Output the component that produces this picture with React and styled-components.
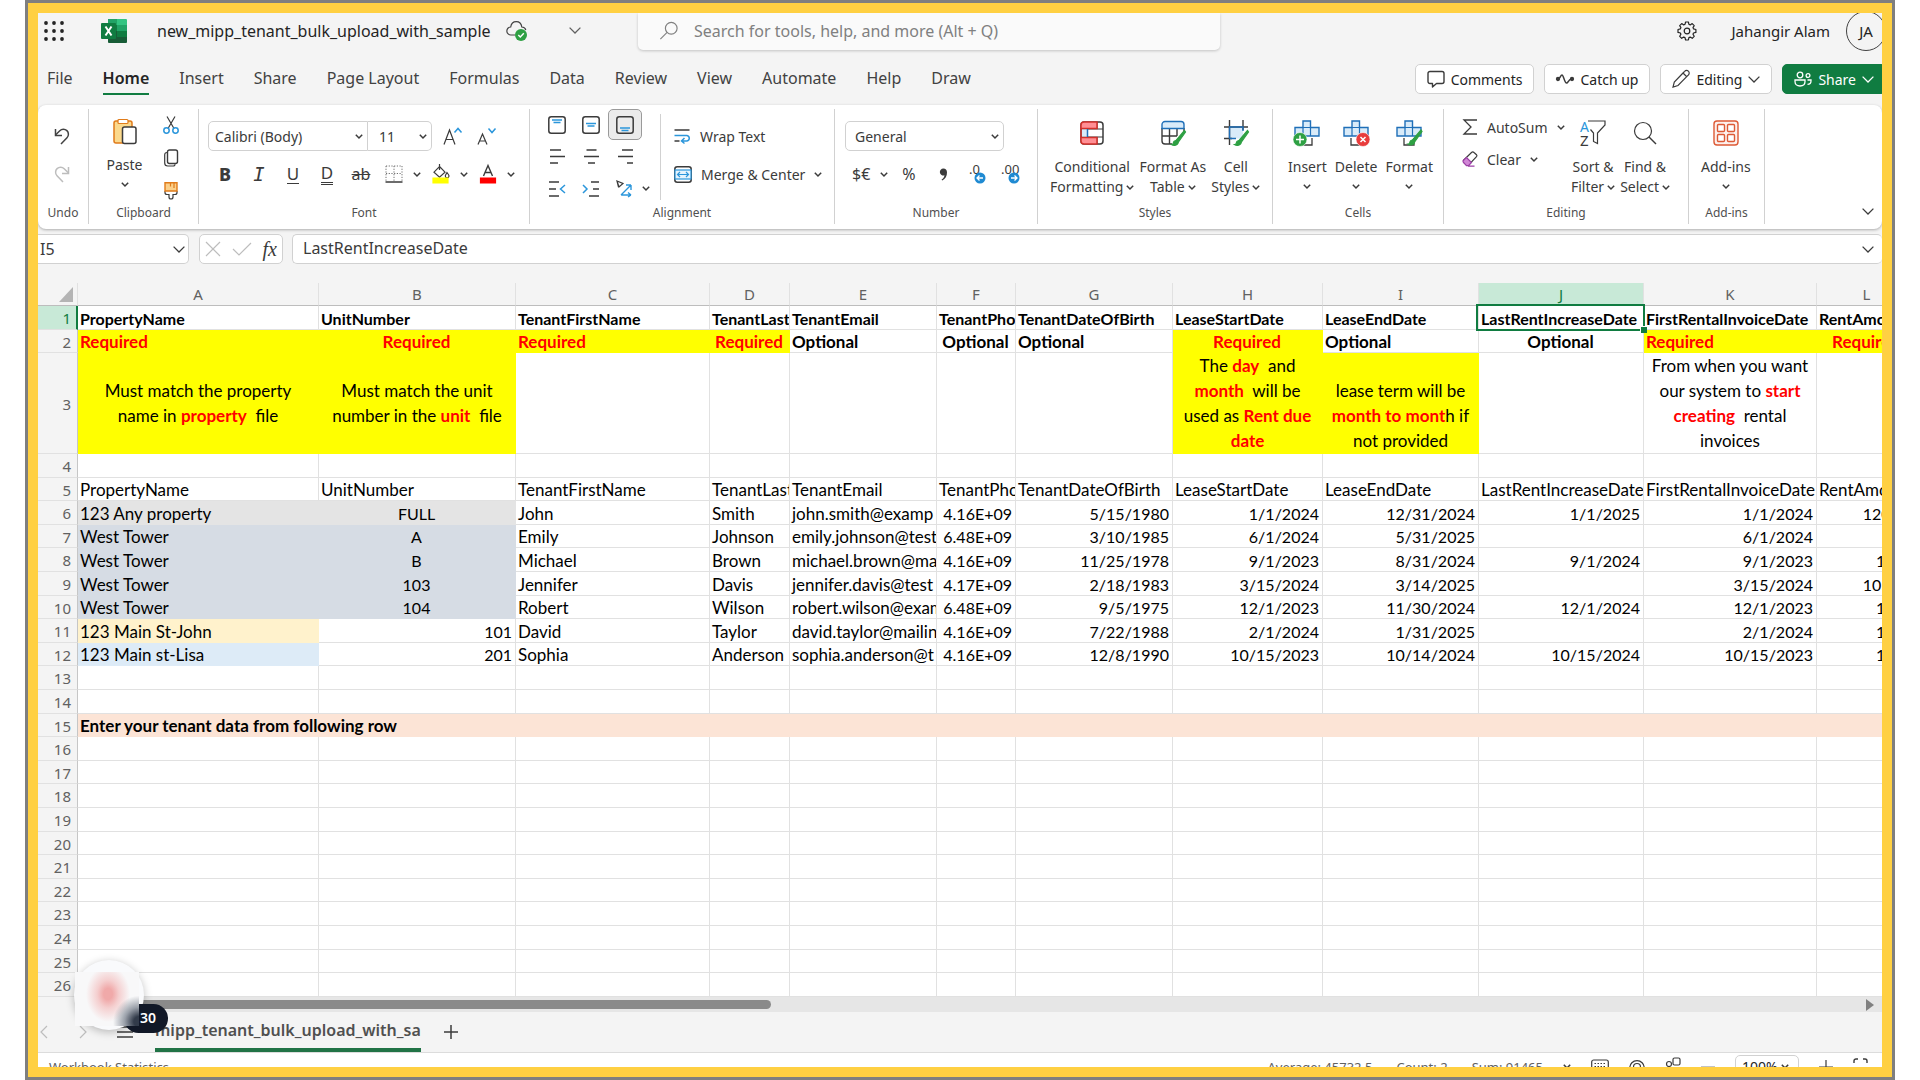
import React from 'react';
import styled, { createGlobalStyle, css } from 'styled-components';

const colors = {
  green: '#107c41',
  blue: '#2b96db',
  deepBlue: '#1f6fb8',
  paleBlue: '#d9ebf9',
  ink: '#3b3b3b',
  chrome: '#f4f4f4',
  line: '#d1d1d1',
  grid: '#e1e1e1',
  yellow: '#ffff00',
  red: '#ff0000',
};

const uiFont = "'Noto Sans', 'Open Sans', sans-serif";
const cellFont = "Lato, 'Noto Sans', sans-serif";

const GlobalStyle = createGlobalStyle`
  * {
    box-sizing: border-box;
  }

  body {
    margin: 0;
    background: #fff;
    color: ${colors.ink};
    font-family: ${uiFont};
  }

  button, input, select {
    margin: 0;
    padding: 0;
    border: 0;
    background: none;
    color: inherit;
    font: inherit;
    outline: none;
  }

  button {
    cursor: pointer;
  }
`;

const Frame = styled.div`
  margin: 0 25px;
  height: 100vh;
  border: 3px solid #7f7f7f;
  background: #ffd042;
  padding: 10px;
`;

const Window = styled.main`
  position: relative;
  height: 100%;
  overflow: hidden;
  display: flex;
  flex-direction: column;
  background: ${colors.chrome};
`;

const Svg = styled.svg`
  display: block;
  flex: none;
  overflow: visible;
`;

const Icon = ({ w = 20, h = w, box = '0 0 20 20', stroke = colors.ink, sw = 1.2, children }) => (
  <Svg width={w} height={h} viewBox={box} fill="none" stroke={stroke} strokeWidth={sw} aria-hidden="true">
    {children}
  </Svg>
);

const Caret = () => (
  <Icon w={8} h={5} box="0 0 8 5" sw={1.5}><path d="M.8.8 4 4 7.2.8" /></Icon>
);

const Chevron = ({ color = colors.ink }) => (
  <Icon w={12} h={7} box="0 0 12 7" stroke={color} sw={1.3}><path d="M.6.6 6 6 11.4.6" /></Icon>
);

/* ---------- title bar ---------- */

const TitleBar = styled.header`
  flex: none;
  height: 35px;
  display: flex;
  align-items: center;
  font-size: 16px;
  color: #242424;
`;

const TitleLeft = styled.div`
  width: 600px;
  display: flex;
  align-items: center;
  padding-left: 6px;
`;

const IconButton = styled.button`
  display: flex;
  align-items: center;
  justify-content: center;
`;

const Logo = styled.div`
  margin: 0 30px 0 37px;
`;

const FileName = styled.h1`
  margin: 0 15px 0 0;
  font-size: 16px;
  font-weight: 400;
  white-space: nowrap;
`;

const FileMenu = styled(IconButton)`
  margin-left: 42px;
`;

const SearchBox = styled.label`
  flex: 0 1 582px;
  height: 37px;
  align-self: flex-start;
  display: flex;
  align-items: center;
  gap: 16px;
  padding: 0 0 2px 22px;
  background: #fafafa;
  border-radius: 0 0 5px 5px;
  box-shadow: 0 1px 3px rgba(0, 0, 0, 0.2);

  input {
    flex: 1;
  }

  input::placeholder {
    color: #808080;
    opacity: 1;
  }
`;

const TitleRight = styled.div`
  flex: 1;
  display: flex;
  align-items: center;
  justify-content: flex-end;
  margin-right: -4px;
`;

const UserName = styled.span`
  margin: 0 16px 0 34px;
  font-size: 15px;
`;

const Avatar = styled.button`
  flex: none;
  width: 40px;
  height: 40px;
  border: 1px solid #424242;
  border-radius: 50%;
  font-size: 15px;
`;

/* ---------- tabs ---------- */

const TabBar = styled.div`
  flex: none;
  height: 57px;
  display: flex;
  align-items: center;
  justify-content: space-between;
  padding: 5px 0 0 9px;
`;

const Tabs = styled.nav`
  display: flex;
  gap: 30px;
`;

const Tab = styled.button`
  height: 32px;
  font-size: 16px;
  font-weight: ${({ $active }) => ($active ? 600 : 400)};
  color: ${({ $active }) => ($active ? '#242424' : '#424242')};
  border-bottom: 2px solid ${({ $active }) => ($active ? colors.green : 'transparent')};
`;

const Actions = styled.div`
  display: flex;
  gap: 10px;
  margin-right: -4px;
`;

const ActionButton = styled.button`
  height: 30px;
  display: flex;
  align-items: center;
  gap: 6px;
  padding: 0 11px;
  border: 1px solid ${({ $primary }) => ($primary ? colors.green : colors.line)};
  border-radius: 5px;
  background: ${({ $primary }) => ($primary ? colors.green : '#fff')};
  color: ${({ $primary }) => ($primary ? '#fff' : '#242424')};
  font-size: 14px;
  white-space: nowrap;
`;

/* ---------- ribbon ---------- */

const Ribbon = styled.section`
  flex: none;
  height: 124px;
  display: flex;
  padding: 4px 0 5px;
  background: #fff;
  border-radius: 8px;
  box-shadow: 0 1px 3px rgba(0, 0, 0, 0.3);
  font-size: 14px;
`;

const GroupBox = styled.div`
  flex: none;
  width: ${({ $width }) => $width}px;
  display: flex;
  flex-direction: column;
  border-right: 1px solid ${colors.line};
`;

const GroupBody = styled.div`
  flex: 1;
  display: flex;
  min-height: 0;
  padding: 0 ${({ $pad }) => $pad || 0}px;
`;

const GroupLabel = styled.div`
  height: 22px;
  line-height: 22px;
  text-align: center;
  font-size: 12px;
  color: #505050;
`;

const Group = ({ label, width, pad, children }) => (
  <GroupBox $width={width}>
    <GroupBody $pad={pad}>{children}</GroupBody>
    <GroupLabel>{label}</GroupLabel>
  </GroupBox>
);

const IconColumn = styled.div`
  width: ${({ $width }) => $width}px;
  display: flex;
  flex-direction: column;
  align-items: center;
  padding-top: ${({ $top }) => $top}px;
  gap: ${({ $gap }) => $gap}px;
`;

const BigButton = styled.button`
  display: flex;
  flex-direction: column;
  align-items: center;
  padding-top: 11px;
  line-height: 20px;
  white-space: nowrap;

  > svg:first-child {
    margin-bottom: 11px;
  }

  > svg:last-child {
    margin-top: 7px;
  }
`;

const CaretLine = styled.span`
  display: flex;
  align-items: center;
  gap: 3px;
`;

const PasteButton = styled(BigButton)`
  width: 71px;
  padding-top: 9px;

  > svg:first-child {
    margin-bottom: 10px;
  }
`;

const Stack = styled.div`
  flex: 1;
  display: flex;
  flex-direction: column;
  padding-top: 12px;
  gap: 8px;
`;

const Line = styled.div`
  height: 30px;
  display: flex;
  align-items: center;
`;

const SelectBox = styled.div`
  width: ${({ $width }) => $width}px;
  height: 30px;
  display: grid;
  align-items: center;
  border: 1px solid ${colors.line};
  border-radius: ${({ $shape }) => $shape || '5px'};
  background: #fff;

  & + & {
    border-left: 0;
  }

  select {
    grid-area: 1 / 1;
    width: 100%;
    height: 28px;
    appearance: none;
    padding-left: ${({ $pad }) => $pad || 6}px;
  }

  svg {
    grid-area: 1 / 1;
    justify-self: end;
    margin-right: 4px;
    pointer-events: none;
  }
`;

const Dropdown = ({ label, value, ...box }) => (
  <SelectBox {...box}>
    <select aria-label={label} defaultValue={value}><option>{value}</option></select>
    <Caret />
  </SelectBox>
);

const SizeButtons = styled.div`
  display: flex;
  align-items: center;
  gap: 15px;
  padding-left: 11px;
`;

const ToolButton = styled.button`
  width: 34px;
  height: 30px;
  display: flex;
  align-items: center;
  justify-content: center;
`;

const SplitButton = styled.button`
  width: 47px;
  height: 30px;
  display: flex;
  align-items: center;
  gap: 10px;
  padding-left: 7px;
`;

const AlignGrid = styled.div`
  display: grid;
  grid-template-columns: repeat(3, 34px);
  grid-auto-rows: 31px;
  row-gap: 1px;
  padding-left: 10px;
  width: 130px;
`;

const AlignButton = styled.button`
  display: flex;
  align-items: center;
  justify-content: center;
  border: 1px solid ${({ $on }) => ($on ? '#9a9a9a' : 'transparent')};
  border-radius: 5px;
  background: ${({ $on }) => ($on ? '#ebebeb' : 'none')};
`;

const OrientButton = styled(AlignButton)`
  width: 50px;
  gap: 9px;
  justify-content: flex-start;
  padding-left: 7px;
`;

const WrapStack = styled(Stack)`
  border-left: 1px solid ${colors.line};
  margin: 5px 0 2px;
  padding: 7px 0 0 13px;
`;

const TextButton = styled.button`
  height: ${({ $h }) => $h || 30}px;
  display: flex;
  align-items: center;
  gap: 9px;
  white-space: nowrap;
`;

const EditStack = styled.div`
  width: 120px;
  padding-top: 2px;
`;

const Symbol = styled.span`
  font-size: 16px;
`;

const Buttons = styled.div`
  display: flex;
  align-items: flex-start;
  gap: ${({ $gap }) => $gap}px;
`;

const RibbonEnd = styled.div`
  flex: 1;
  display: flex;
  align-items: flex-end;
  justify-content: flex-end;
  padding: 0 8px 9px 0;
`;

/* ---------- formula bar ---------- */

const FormulaBar = styled.div`
  flex: none;
  height: 54px;
  display: flex;
  padding-top: 5px;
  font-size: 16px;
`;

const FormulaBox = styled.div`
  height: 30px;
  display: flex;
  align-items: center;
  justify-content: space-between;
  background: #fff;
  border: 1px solid ${colors.line};
  border-radius: 5px;
`;

const NameBox = styled(FormulaBox)`
  width: 151px;
  margin-right: 10px;
  padding: 0 3px 0 2px;
  border-left: 0;
  border-radius: 0 5px 5px 0;

  input {
    width: 100px;
  }
`;

const FxBox = styled(FormulaBox)`
  width: 84px;
  margin-right: 9px;
  padding: 0 5px;
`;

const FormulaInput = styled(FormulaBox)`
  flex: 1;
  padding: 0 8px 0 10px;
  border-right: 0;

  input {
    flex: 1;
    height: 26px;
    align-self: flex-start;
  }
`;

const Fx = styled.span`
  font-family: 'Liberation Serif', serif;
  font-style: italic;
  font-size: 20px;
`;

/* ---------- sheet ---------- */

const Sheet = styled.div`
  position: relative;
  flex: 1 0 auto;
  overflow: hidden;
`;

const Table = styled.table`
  width: 1879px;
  table-layout: fixed;
  border-collapse: separate;
  border-spacing: 0;
  background: #fff;
  font-family: ${cellFont};
  color: #000;
`;

const Row = styled.tr`
  height: ${({ $tall }) => ($tall ? 101 : 24)}px;

  &:nth-child(5n),
  &:nth-child(5n + 2) {
    height: 23px;
  }
`;

const HeadRow = styled.tr`
  height: 23px;
`;

const header = css`
  padding: 0;
  background: ${({ $on }) => ($on ? '#c8e9d7' : colors.chrome)};
  color: ${({ $on }) => ($on ? colors.green : '#616161')};
  font-family: ${uiFont};
  font-size: 15px;
  font-weight: 400;
  line-height: 20px;
`;

const ColHead = styled.th`
  ${header}
  border-right: 1px solid ${colors.grid};
  border-bottom: 1px solid #bdbdbd;
`;

const Corner = styled(ColHead)`
  svg {
    margin-left: 21px;
  }
`;

const RowHead = styled.th`
  ${header}
  padding: 1px ${({ $on }) => ($on ? 5 : 6)}px 0 0;
  text-align: right;
  border-right: ${({ $on }) => ($on ? `2px solid ${colors.green}` : '1px solid #c6c6c6')};
  border-bottom: 1px solid ${colors.grid};
`;

const Cell = styled.td`
  position: relative;
  padding: 2px 3px 0 2px;
  overflow: ${({ $selected }) => ($selected ? 'visible' : 'hidden')};
  white-space: nowrap;
  text-align: ${({ $align }) => $align || 'left'};
  font-size: ${({ $small }) => ($small ? 16 : 17)}px;
  line-height: 20px;
  font-weight: ${({ $bold }) => ($bold ? 700 : 400)};
  color: ${({ $red }) => ($red ? colors.red : '#000')};
  background: ${({ $bg }) => $bg || '#fff'};
  border-right: 1px solid ${({ $bg }) => $bg || colors.grid};
  border-bottom: 1px solid ${({ $bg }) => $bg || colors.grid};

  b {
    color: ${colors.red};
  }
`;

const NoteCell = styled(Cell)`
  padding: 0;
  line-height: 25px;
  vertical-align: ${({ $low }) => ($low ? 'bottom' : 'middle')};
`;

const Selection = styled.span`
  position: absolute;
  z-index: 1;
  inset: -2px -2px -2px -3px;
  border: 2px solid ${colors.green};

  &::after {
    content: '';
    position: absolute;
    right: -4px;
    bottom: -4px;
    width: 6px;
    height: 6px;
    background: ${colors.green};
    border: 1px solid #fff;
    border-width: 1px 0 0 1px;
  }
`;

const ScrollTrack = styled.div`
  flex: none;
  height: 15px;
  margin-left: 40px;
  padding: 0 8px 0 17px;
  display: flex;
  align-items: center;
  justify-content: space-between;
  background: #e6e6e6;
`;

const ScrollThumb = styled.div`
  width: 38%;
  height: 9px;
  border-radius: 5px;
  background: #8a8a8a;
`;

const SheetBar = styled.div`
  flex: none;
  height: 40px;
  display: flex;
  align-items: stretch;
  padding-left: 2px;
`;

const SheetNav = styled.div`
  width: 115px;
  display: flex;
  align-items: center;
  justify-content: space-between;
  padding: 0 22px 0 0;
`;

const SheetTab = styled.button`
  border-bottom: 4px solid #217346;
  font-size: 16px;
  font-weight: 600;
  color: #505050;
  margin-right: 22px;
`;

const StatusBar = styled.footer`
  flex: none;
  height: 28px;
  display: flex;
  align-items: center;
  justify-content: space-between;
  padding: 0 14px 0 11px;
  background: #fff;
  border-top: 1px solid #dcdcdc;
  font-size: 13px;
  color: #616161;
`;

const StatusItems = styled.div`
  display: flex;
  align-items: center;
  gap: ${({ $gap }) => $gap}px;
`;

const ZoomSelect = styled(SelectBox)`
  height: 24px;
  color: #242424;
  font-size: 14px;

  select {
    height: 20px;
  }

  svg {
    margin-right: 9px;
  }
`;

const Bubble = styled.div`
  position: absolute;
  z-index: 2;
  left: 36px;
  bottom: 37px;
  width: 70px;
  height: 70px;
  border-radius: 50%;
  background: #f9fafc;
  box-shadow: 0 2px 8px rgba(0, 0, 0, 0.25);
`;

const Badge = styled.span`
  position: absolute;
  left: 50px;
  top: 44px;
  width: 44px;
  height: 29px;
  padding-right: 12px;
  border-radius: 15px;
  background: #111827;
  color: #fff;
  font-size: 14px;
  font-weight: 600;
  line-height: 28px;
  text-align: right;
`;

const Smudge = styled.span`
  position: absolute;
  left: 1px;
  top: 12px;
  width: 64px;
  height: 54px;
  background:
    radial-gradient(ellipse 26px 26px at 100% 92%, #323b4a 20%, rgba(90, 100, 115, 0.6) 55%, transparent 100%),
    radial-gradient(ellipse 22px 28px at 33px 22px, #f0a9a9 20%, rgba(243, 190, 190, 0.7) 50%, transparent 100%),
    #f8f8f9;
`;

/* ---------- drawings ---------- */

const Waffle = () => (
  <Icon stroke="none">
    {[2, 10, 18].map((y) => [2, 10, 18].map((x) => <circle key={`${x}${y}`} cx={x} cy={y} r="1.9" fill="#242424" />))}
  </Icon>
);

const ExcelLogo = () => (
  <Icon w={26} h={24} box="0 0 26 24" stroke="none">
    <path d="M7 0h10v6H7z" fill="#21a366" />
    <path d="M16 0h9a1 1 0 0 1 1 1v5H16z" fill="#33c481" />
    <path d="M7 6h9v6H7z" fill="#107c41" />
    <path d="M16 6h10v6H16z" fill="#21a366" />
    <path d="M7 12h9v11H7z" fill="#185c37" />
    <path d="M16 12h10v6H16z" fill="#107c41" />
    <path d="M7 18h19v5a1 1 0 0 1-1 1H8a1 1 0 0 1-1-1z" fill="#185c37" />
    <rect y="4" width="15" height="16" rx="1" fill="#107c41" />
    <path d="m4.5 7.500 6 9M10.500 7.500l-6 9" stroke="#fff" strokeWidth="2" />
  </Icon>
);

const CloudSaved = () => (
  <Icon w={21} h={20} box="0 0 21 20" stroke="#424242">
    <path d="M9 14H5a4 4 0 0 1-.3-8C5.200 2.500 7.500.7 10.300.7s5 1.800 5.500 5.300c2 .2 3.600 1.400 4 3" />
    <circle cx="15" cy="14" r="6" fill="#2ea043" stroke="none" />
    <path d="m12.300 14 2 2 3.500-3.800" stroke="#fff" strokeWidth="1.400" />
  </Icon>
);

const Gear = () => (
  <Icon box="0 0 20 20" stroke="#242424">
    <path d="M8.600 1h2.800l.5 2.300 1.300.6 2-1.300 2 2-1.200 2 .5 1.300 2.400.6v2.900l-2.400.6-.5 1.300 1.200 2-2 2-2-1.200-1.300.5-.5 2.400H8.600l-.6-2.400-1.300-.5-2 1.200-2-2 1.200-2-.5-1.300-2.400-.6V8.500l2.400-.6.5-1.300-1.200-2 2-2 2 1.300 1.300-.6z" strokeLinejoin="round" />
    <circle cx="10" cy="10" r="2.800" />
  </Icon>
);

const Magnifier = () => (
  <Icon w={18} stroke="#808080" sw={1.3}><circle cx="12.500" cy="7" r="6.500" /><path d="m7.900 11.600-7.500 7.500" /></Icon>
);

const Paste = () => (
  <Icon w={24} h={27} box="0 0 24 27">
    <rect x="1" y="3" width="18" height="22" rx="2" fill="#fbd98d" stroke="#e07b1a" strokeWidth="1.500" />
    <path d="M6 1.500h8a1 1 0 0 1 1 1v2a1 1 0 0 1-1 1H6a1 1 0 0 1-1-1v-2a1 1 0 0 1 1-1z" fill="#fff" stroke="#e07b1a" />
    <rect x="9.500" y="9" width="13.500" height="16.500" rx="2" fill="#fff" strokeWidth="1.500" />
  </Icon>
);

const Cut = () => (
  <Icon w={16} h={18} box="0 0 16 18">
    <path d="m4 .5 7 12M12 .5l-7 12" />
    <circle cx="3.500" cy="14.500" r="2.700" stroke={colors.blue} strokeWidth="1.500" />
    <circle cx="12.500" cy="14.500" r="2.700" stroke={colors.blue} strokeWidth="1.500" />
  </Icon>
);

const Copy = () => (
  <Icon w={14} h={18} box="0 0 14 18">
    <rect x="3.500" y="1" width="10" height="13.500" rx="2" strokeWidth="1.400" />
    <path d="M3 3.500C1.500 3.500.7 4.500.7 6v8a3 3 0 0 0 3 3H9c1.200 0 2-.6 2-1.800" />
  </Icon>
);

const Painter = () => (
  <Icon w={14} h={18} box="0 0 14 18">
    <path d="M1 9v1.500a2 2 0 0 0 2 2h2V15a2 2 0 0 0 4 0v-2.500h2a2 2 0 0 0 2-2V9" />
    <path d="M1 .8h12V9H1z" fill="#fbd08a" stroke="#e07b1a" strokeWidth="1.400" />
    <path d="M6.500 1v3.500M10 1v5" stroke="#e07b1a" />
  </Icon>
);

const Undo = ({ flip, color }) => (
  <Icon w={16} h={18} box="0 0 16 18" stroke={color || '#424242'} sw={1.5}>
    <g transform={flip ? 'matrix(-1 0 0 1 16 0)' : undefined}>
      <path d="M1.500 2v6.500H8" />
      <path d="m1.500 8 4.300-4.300a5 5 0 0 1 7.200 7L7 17" />
    </g>
  </Icon>
);

const Grow = ({ up }) => (
  <Icon w={19} h={20} box="0 0 19 20">
    {up ? <path d="M1 18.500 6.500 4 12 18.500M3 13.500h7" /> : <path d="M1 18.500 5.500 8 10 18.500M2.800 15h5.500" />}
    <path d={up ? 'm11.500 6.500 3.500-4 3.500 4' : 'm11.500 2.500 3.500 4 3.500-4'} stroke={colors.blue} strokeWidth="1.500" />
  </Icon>
);

const Bold = styled.span`
  font-size: 18px;
  font-weight: 800;
`;

const Italic = styled.span`
  font: italic 19px 'DejaVu Sans Mono', monospace;
`;

const Under = styled.span`
  font-size: 17px;
  line-height: 18px;
  border-bottom: ${({ $double }) => ($double ? '3px double' : '1px solid')} ${colors.ink};
`;

const Strike = styled.span`
  font-size: 16px;
  text-decoration: line-through;
`;

const Borders = () => (
  <Icon w={18} box="0 0 18 18" stroke="#707070">
    <path d="M1 1h16M1 8.500h16M1 1v15M9 1v15M17 1v15" strokeWidth="1" strokeDasharray="1.200 1.500" />
    <path d="M.5 17h17" stroke={colors.ink} strokeWidth="1.500" />
  </Icon>
);

const Fill = () => (
  <Icon w={18} h={20} box="0 0 18 20">
    <path d="m7.500 2.500 5.500 5.700-5.500 5-5.500-5zM7.500 0v6" />
    <path d="M15 8.500c1.500 2 2 2.800 2 3.600a1.800 1.800 0 0 1-3.700 0c0-.8.600-1.600 1.700-3.600z" />
    <path d="M1 14h15v5H1z" fill={colors.yellow} stroke={colors.yellow} />
  </Icon>
);

const FontColor = () => (
  <Icon w={18} h={20} box="0 0 18 20">
    <path d="M4.500 12 9 1.500 13.500 12M6 8.500h6" strokeWidth="1.400" />
    <path d="M1.500 14h15v5h-15z" fill={colors.red} stroke={colors.red} />
  </Icon>
);

const VAlign = ({ y }) => (
  <Icon w={18} box="0 0 18 18">
    <rect x=".8" y=".8" width="16.400" height="16.400" rx="2.500" strokeWidth="1.500" />
    <path d={`M4 ${y}h10M5.500 ${y + 2.5}h7`} stroke={colors.blue} strokeWidth="1.300" />
  </Icon>
);

const hLines = {
  left: 'M1 1h11M1 7.500h15M1 14h8',
  center: 'M3.500 1h10M1 7.500h15M5 14h7',
  right: 'M5 1h11M1 7.500h15M10 14h6',
};

const HAlign = ({ side }) => (
  <Icon w={17} h={15} box="0 0 17 15"><path d={hLines[side]} strokeWidth="1.500" /></Icon>
);

const Indent = ({ right }) => (
  <Icon w={18} h={16} box="0 0 18 16" sw={1.5}>
    <path d={right ? 'M9 1h8M11 8h6M7 15h10' : 'M1 1h10M1 8h7M1 15h10'} />
    <path d={right ? 'm1 4 4 4-4 4' : 'm17 4-4.500 4 4.500 4'} stroke={colors.blue} />
  </Icon>
);

const Orient = () => (
  <Icon w={17} h={17} box="0 0 17 17">
    <path d="M1 1l6 2.500-4 3.500zM1 1l1.500 6" />
    <path d="M5 15 15 5m0 0h-5m5 0v5M5 15h10m0 0-3-2.500m3 2.500-3 2" stroke={colors.blue} strokeWidth="1.400" />
  </Icon>
);

const Wrap = () => (
  <Icon w={17} h={14} box="0 0 17 14" sw={1.5}>
    <path d="M.5 1h15M.5 12h5" />
    <path d="M.5 6.500H13a2.800 2.800 0 0 1 0 5.500H8m2.500-3L7.500 12l3 2.500" stroke={colors.blue} />
  </Icon>
);

const Merge = () => (
  <Icon w={18} h={17} box="0 0 18 17">
    <rect x=".8" y=".8" width="16.400" height="15.400" rx="2.500" strokeWidth="1.500" />
    <rect x="1" y="4" width="16" height="9" fill="#e6f3fc" stroke={colors.blue} />
    <path d="M3.500 8.500h11M6 6 3.500 8.500 6 11M12 6l2.500 2.500L12 11" stroke={colors.blue} />
  </Icon>
);

const Decimal = ({ zeros, right }) => (
  <Icon w={20} h={20} box="0 0 20 20">
    <text x={right ? 0 : 2} y="10" fontSize="13" fill={colors.ink} stroke="none" fontFamily={uiFont}>{zeros}</text>
    <circle cx="13" cy="14" r="5.500" fill="#1f8ad2" stroke="none" />
    <path d={right ? 'M10 14h6m-2.500-2.500L16 14l-2.500 2.500' : 'M16 14h-6m2.500-2.500L10 14l2.500 2.500'} stroke="#fff" strokeWidth="1.300" />
  </Icon>
);

const Conditional = () => (
  <Icon w={24} h={26} box="0 0 24 26">
    <rect x="1" y="2" width="22" height="22" rx="3" strokeWidth="1.500" />
    <path d="M1 9h22M1 17h22M17 2v7m0 8v7" />
    <path d="M4 2h13v6.500H1V5a3 3 0 0 1 3-3zM1 17.500h16V24H4a3 3 0 0 1-3-3z" fill="#ff8f94" stroke="#d3312b" strokeWidth="1.500" />
    <path d="M1 8.500v9" stroke="#d3312b" strokeWidth="1.500" />
    <path d="M2 9.500h5v7H2z" fill={colors.paleBlue} stroke="none" />
    <path d="M7.500 9v8" stroke={colors.deepBlue} strokeWidth="1.500" />
  </Icon>
);

const Brush = ({ x = 0, y = 0 }) => (
  <g transform={`translate(${x} ${y})`} stroke="none">
    <path d="M13 0 4.500 10l2 2L14 1.500z" fill="#2ea043" stroke="#2ea043" />
    <path d="M5 10c-2 0-3 1-3.200 2.500C1.700 13.600 1 14 0 14c2 1.500 6.500 1 6.500-2z" fill="#2ea043" stroke="#2ea043" />
  </g>
);

const FormatTable = () => (
  <Icon w={24} h={26} box="0 0 24 26">
    <path d="M1 8v13a3 3 0 0 0 3 3h7M8.500 8v16M16 8v8M1 16h15M23 8v3" strokeWidth="1.400" />
    <path d="M4 1.500h16a3 3 0 0 1 3 3V8.500H1v-4a3 3 0 0 1 3-3z" fill={colors.paleBlue} stroke={colors.deepBlue} strokeWidth="1.400" />
    <Brush x={10.5} y={10.5} />
  </Icon>
);

const CellStyles = () => (
  <Icon w={24} h={26} box="0 0 24 26">
    <path d="M6 7.500h13v11H6z" fill={colors.paleBlue} stroke="none" />
    <path d="M0 7h24M0 18.500h8M5.500 0v25M19 0v10" strokeWidth="1.400" />
    <path d="M5.500 18.500V7H19v4M5.500 18.500H12" stroke={colors.deepBlue} strokeWidth="1.400" />
    <Brush x={10.5} y={10.5} />
  </Icon>
);

const CellsCross = ({ children }) => (
  <Icon w={26} h={26} box="0 0 26 26">
    <path d="M2 13V8h22v3M8 18v7h10v-7" strokeWidth="1.300" />
    <path d="M9 1h7.500v6.500H25v8.500H1V7.500h8z" fill={colors.paleBlue} stroke={colors.deepBlue} strokeWidth="1.400" />
    <path d="M9 7.500V16M16.500 7.500V16M9 7.500h7.500" stroke={colors.deepBlue} strokeWidth="1.200" />
    {children}
  </Icon>
);

const InsertCells = () => (
  <CellsCross>
    <circle cx="6" cy="19.500" r="7" fill="#2ea043" stroke="#fff" strokeWidth=".6" />
    <path d="M6 15.500v8M2 19.500h8" stroke="#fff" strokeWidth="1.500" />
  </CellsCross>
);

const DeleteCells = () => (
  <CellsCross>
    <circle cx="20" cy="19.500" r="7" fill="#e83c3c" stroke="#fff" strokeWidth=".6" />
    <path d="m17.500 17 5 5m0-5-5 5" stroke="#fff" strokeWidth="1.500" />
  </CellsCross>
);

const FormatCells = () => <CellsCross><Brush x={12} y={10} /></CellsCross>;

const Sigma = () => (
  <Icon w={16} h={16} box="0 0 16 16"><path d="M15 1H2l7 7-7 7h13" strokeWidth="1.300" /></Icon>
);

const Eraser = () => (
  <Icon w={16} h={16} box="0 0 16 16">
    <path d="M9.500 1.500 1.500 9.200l5 5 8-8.500a1.500 1.500 0 0 0 0-2L12 1.500a1.800 1.800 0 0 0-2.500 0z" />
    <path d="m1.500 9.200 3-2.700 5 5-3 3.200h-2l-3-3.200a1.600 1.600 0 0 1 0-2.300zM6 15.200h6.500" fill="#d187d6" stroke="#9b3fa5" />
  </Icon>
);

const SortFilter = () => (
  <Icon w={26} h={26} box="0 0 26 26">
    <text x="0" y="12" fontSize="14" fill={colors.blue} stroke="none" fontFamily={uiFont}>A</text>
    <text x="0" y="25.500" fontSize="15" fill={colors.ink} stroke="none" fontFamily={uiFont}>Z</text>
    <path d="M8 1h17v4l-7.500 8v10.500l-4-2V13L10.500 9.500" />
  </Icon>
);

const FindIcon = () => (
  <Icon w={24} h={26} box="0 0 24 26"><circle cx="10" cy="11" r="8.500" /><path d="m16 17 7 7" strokeWidth="1.400" /></Icon>
);

const AddIns = () => (
  <Icon w={26} box="0 0 26 26" stroke="#dd5a36" sw={1.4}>
    <rect x="1" y="1" width="24" height="24" rx="3" fill="#fdf0ec" />
    {[4.5, 14.5].map((y) => [4.5, 14.5].map((x) => <rect key={`${x}${y}`} x={x} y={y} width="7" height="7" rx="1" fill="#fff" />))}
  </Icon>
);

const Comment = () => (
  <Icon w={18} box="0 0 18 18" sw={1.4}><path d="M3 1.500h12a2 2 0 0 1 2 2v8a2 2 0 0 1-2 2H9.500L5.500 17v-3.500H3a2 2 0 0 1-2-2v-8a2 2 0 0 1 2-2z" strokeLinejoin="round" /></Icon>
);

const CatchUp = () => (
  <Icon w={18} h={10} box="0 0 18 10" sw={1.5}>
    <path d="M2 5c2 0 2.500-4 4-4s2.500 8 4.500 8S12 5 16 5" />
    <circle cx="2" cy="5" r="1.400" fill={colors.ink} /><circle cx="16" cy="5" r="1.400" fill={colors.ink} />
  </Icon>
);

const Pencil = () => (
  <Icon w={18} box="0 0 18 18"><path d="m11.500 2.500 1.200-1.200a2.400 2.400 0 0 1 3.800 3.500l-1.300 1.400L6 15.500 1 17l1.300-5zM11 3l4 4" /></Icon>
);

const People = () => (
  <Icon w={18} h={16} box="0 0 18 16" stroke="#fff" sw={1.3}>
    <circle cx="6" cy="4" r="2.800" /><circle cx="14" cy="4.500" r="1.900" />
    <path d="M1 9h10v1.500c0 3-2 4.500-5 4.500s-5-1.500-5-4.500zM13.500 9H17v1c0 2.200-1 3.300-3.500 3.300" />
  </Icon>
);

/* ---------- data ---------- */

const columns = [
  ['A', 241], ['B', 197], ['C', 194], ['D', 80], ['E', 147], ['F', 79],
  ['G', 157], ['H', 150], ['I', 156], ['J', 165], ['K', 173], ['L', 100],
];

const fields = [
  'PropertyName', 'UnitNumber', 'TenantFirstName', 'TenantLastName', 'TenantEmail', 'TenantPhone',
  'TenantDateOfBirth', 'LeaseStartDate', 'LeaseEndDate', 'LastRentIncreaseDate', 'FirstRentalInvoiceDate', 'RentAmount',
];

const required = { text: 'Required', bold: true, red: true, bg: colors.yellow };
const optional = { text: 'Optional', bold: true };
const center = (cell) => ({ ...cell, align: 'center' });
const note = (text, bg, low) => ({ text, bg, low, align: 'center', note: true });

const flags = [
  required, center(required), required, center(required), optional, center(optional),
  optional, center(required), optional, center(optional), required, center(required),
];

const notes = {
  0: note(<>Must match the property<br />name in <b>property</b>&nbsp; file</>, colors.yellow),
  1: note(<>Must match the unit<br />number in the <b>unit</b>&nbsp; file</>, colors.yellow),
  7: note(<>The <b>day</b>&nbsp; and<br /><b>month</b>&nbsp; will be<br />used as <b>Rent due</b><br /><b>date</b></>, colors.yellow),
  8: note(<>lease term will be<br /><b>month to mont</b>h if<br />not provided</>, colors.yellow, true),
  10: note(<>From when you want<br />our system to <b>start</b><br /><b>creating</b>&nbsp; rental<br />invoices</>),
};

const grey = '#e4e4e4';
const slate = '#d6dce4';

const tenants = [
  [grey, '123 Any property', 'FULL', 'John', 'Smith', 'john.smith@examp', '4.16E+09', '5/15/1980', '1/1/2024', '12/31/2024', '1/1/2025', '1/1/2024', '1200.5'],
  [slate, 'West Tower', 'A', 'Emily', 'Johnson', 'emily.johnson@test', '6.48E+09', '3/10/1985', '6/1/2024', '5/31/2025', '', '6/1/2024', ''],
  [slate, 'West Tower', 'B', 'Michael', 'Brown', 'michael.brown@ma', '4.16E+09', '11/25/1978', '9/1/2023', '8/31/2024', '9/1/2024', '9/1/2023', '1500'],
  [slate, 'West Tower', '103', 'Jennifer', 'Davis', 'jennifer.davis@test', '4.17E+09', '2/18/1983', '3/15/2024', '3/14/2025', '', '3/15/2024', '1050.5'],
  [slate, 'West Tower', '104', 'Robert', 'Wilson', 'robert.wilson@exam', '6.48E+09', '9/5/1975', '12/1/2023', '11/30/2024', '12/1/2024', '12/1/2023', '1800'],
  ['#fff2cc', '123 Main St-John', '101', 'David', 'Taylor', 'david.taylor@mailin', '4.16E+09', '7/22/1988', '2/1/2024', '1/31/2025', '', '2/1/2024', '1400'],
  ['#ddebf7', '123 Main st-Lisa', '201', 'Sophia', 'Anderson', 'sophia.anderson@t', '4.16E+09', '12/8/1990', '10/15/2023', '10/14/2024', '10/15/2024', '10/15/2023', '1600'],
];

const tenantRow = ([bg, ...values], index) => values.map((text, col) => {
  const ownUnit = index > 4;
  if (col === 0) return { text, bg };
  if (col === 1) return ownUnit ? { text, align: 'right', small: true } : { text, bg, align: 'center', small: true };
  return col < 5 ? { text } : { text, align: 'right', small: true };
});

const blank = columns.map(() => ({}));

const rows = {
  1: fields.map((text, col) => ({ text, bold: true, small: true, selected: col === 9 })),
  2: flags,
  3: columns.map((_, col) => notes[col] || {}),
  5: fields.map((text) => ({ text })),
  15: [{ text: 'Enter your tenant data from following row', bold: true, bg: '#fce4d6', span: 12 }],
};
tenants.forEach((tenant, index) => {
  rows[6 + index] = tenantRow(tenant, index);
});

const tabs = ['File', 'Home', 'Insert', 'Share', 'Page Layout', 'Formulas', 'Data', 'Review', 'View', 'Automate', 'Help', 'Draw'];

const SheetCell = ({ cell }) => {
  const Tag = cell.note ? NoteCell : Cell;
  return (
    <Tag
      colSpan={cell.span}
      $align={cell.align}
      $bold={cell.bold}
      $red={cell.red}
      $small={cell.small}
      $bg={cell.bg}
      $low={cell.low}
      $selected={cell.selected}
    >
      {cell.text}
      {cell.selected && <Selection />}
    </Tag>
  );
};

const RibbonBar = () => (
  <Ribbon aria-label="Home ribbon">
    <Group label="Undo" width={51}>
      <IconColumn $width={48} $top={18} $gap={20}>
        <IconButton aria-label="Undo"><Undo /></IconButton>
        <IconButton aria-label="Redo"><Undo flip color="#bdbdbd" /></IconButton>
      </IconColumn>
    </Group>
    <Group label="Clipboard" width={110}>
      <PasteButton><Paste /><span>Paste</span><Caret /></PasteButton>
      <IconColumn $width={22} $top={7} $gap={15}>
        <IconButton aria-label="Cut"><Cut /></IconButton>
        <IconButton aria-label="Copy"><Copy /></IconButton>
        <IconButton aria-label="Format painter"><Painter /></IconButton>
      </IconColumn>
    </Group>
    <Group label="Font" width={331} pad={9}>
      <Stack>
        <Line>
          <Dropdown label="Font" value="Calibri (Body)" $width={160} $shape="5px 0 0 5px" />
          <Dropdown label="Font size" value="11" $width={64} $pad={11} $shape="0 5px 5px 0" />
          <SizeButtons>
            <IconButton aria-label="Grow font"><Grow up /></IconButton>
            <IconButton aria-label="Shrink font"><Grow /></IconButton>
          </SizeButtons>
        </Line>
        <Line>
          <ToolButton><Bold>B</Bold></ToolButton>
          <ToolButton><Italic>I</Italic></ToolButton>
          <ToolButton><Under>U</Under></ToolButton>
          <ToolButton><Under $double>D</Under></ToolButton>
          <ToolButton><Strike>ab</Strike></ToolButton>
          <SplitButton aria-label="Borders"><Borders /><Caret /></SplitButton>
          <SplitButton aria-label="Fill color"><Fill /><Caret /></SplitButton>
          <SplitButton aria-label="Font color"><FontColor /><Caret /></SplitButton>
        </Line>
      </Stack>
    </Group>
    <Group label="Alignment" width={305}>
      <AlignGrid>
        <AlignButton aria-label="Top align"><VAlign y={4} /></AlignButton>
        <AlignButton aria-label="Middle align"><VAlign y={7.5} /></AlignButton>
        <AlignButton aria-label="Bottom align" $on><VAlign y={12} /></AlignButton>
        <AlignButton aria-label="Align left"><HAlign side="left" /></AlignButton>
        <AlignButton aria-label="Center"><HAlign side="center" /></AlignButton>
        <AlignButton aria-label="Align right"><HAlign side="right" /></AlignButton>
        <AlignButton aria-label="Decrease indent"><Indent /></AlignButton>
        <AlignButton aria-label="Increase indent"><Indent right /></AlignButton>
        <OrientButton aria-label="Orientation"><Orient /><Caret /></OrientButton>
      </AlignGrid>
      <WrapStack>
        <TextButton><Wrap />Wrap Text</TextButton>
        <TextButton><Merge />Merge &amp; Center<Caret /></TextButton>
      </WrapStack>
    </Group>
    <Group label="Number" width={203} pad={10}>
      <Stack>
        <Dropdown label="Number format" value="General" $width={159} $pad={9} />
        <Line>
          <SplitButton aria-label="Currency"><Symbol>$€</Symbol><Caret /></SplitButton>
          <ToolButton><Symbol>%</Symbol></ToolButton>
          <ToolButton aria-label="Comma style">
            <Icon w={9} h={13} box="0 0 9 13"><path d="M4.500.500a3.500 3.500 0 1 0 1 6.800C5.300 9 4.300 10.500 2.500 11.800l.8.8C6.500 10.800 8 8 8 4.500 8 2 6.500.5 4.500.5z" fill={colors.ink} stroke="none" /></Icon>
          </ToolButton>
          <ToolButton aria-label="Increase decimal"><Decimal zeros=".0" /></ToolButton>
          <ToolButton aria-label="Decrease decimal"><Decimal zeros=".00" right /></ToolButton>
        </Line>
      </Stack>
    </Group>
    <Group label="Styles" width={235} pad={12}>
      <Buttons $gap={5}>
        <BigButton><Conditional /><span>Conditional</span><CaretLine>Formatting<Caret /></CaretLine></BigButton>
        <BigButton><FormatTable /><span>Format As</span><CaretLine>Table<Caret /></CaretLine></BigButton>
        <BigButton><CellStyles /><span>Cell</span><CaretLine>Styles<Caret /></CaretLine></BigButton>
      </Buttons>
    </Group>
    <Group label="Cells" width={171} pad={15}>
      <Buttons $gap={8}>
        <BigButton><InsertCells /><span>Insert</span><Caret /></BigButton>
        <BigButton><DeleteCells /><span>Delete</span><Caret /></BigButton>
        <BigButton><FormatCells /><span>Format</span><Caret /></BigButton>
      </Buttons>
    </Group>
    <Group label="Editing" width={245} pad={18}>
      <EditStack>
        <TextButton $h={32}><Sigma />AutoSum<Caret /></TextButton>
        <TextButton $h={32}><Eraser />Clear<Caret /></TextButton>
      </EditStack>
      <Buttons $gap={5}>
        <BigButton><SortFilter /><span>Sort &amp;</span><CaretLine>Filter<Caret /></CaretLine></BigButton>
        <BigButton><FindIcon /><span>Find &amp;</span><CaretLine>Select<Caret /></CaretLine></BigButton>
      </Buttons>
    </Group>
    <Group label="Add-ins" width={76} pad={12}>
      <BigButton><AddIns /><span>Add-ins</span><Caret /></BigButton>
    </Group>
    <RibbonEnd><IconButton aria-label="Collapse ribbon"><Chevron /></IconButton></RibbonEnd>
  </Ribbon>
);

const SheetTable = () => (
  <Sheet>
    <Table>
      <colgroup>
        <col width="40" />
        {columns.map(([name, width]) => <col key={name} width={width} />)}
      </colgroup>
      <thead>
        <HeadRow>
          <Corner><Icon w={14} h={15} box="0 0 14 15" stroke="none"><path d="M14 0v15H0z" fill="#b4b4b4" /></Icon></Corner>
          {columns.map(([name]) => <ColHead key={name} $on={name === 'J'}>{name}</ColHead>)}
        </HeadRow>
      </thead>
      <tbody>
        {Array.from({ length: 26 }, (_, i) => i + 1).map((n) => (
          <Row key={n} $tall={n === 3}>
            <RowHead $on={n === 1}>{n}</RowHead>
            {(rows[n] || blank).map((cell, col) => <SheetCell key={columns[col][0]} cell={cell} />)}
          </Row>
        ))}
      </tbody>
    </Table>
  </Sheet>
);

export default function App() {
  return (
    <>
      <GlobalStyle />
      <Frame>
        <Window>
          <TitleBar>
            <TitleLeft>
              <IconButton aria-label="App launcher"><Waffle /></IconButton>
              <Logo><ExcelLogo /></Logo>
              <FileName>new_mipp_tenant_bulk_upload_with_sample</FileName>
              <CloudSaved />
              <FileMenu aria-label="File options"><Chevron color="#616161" /></FileMenu>
            </TitleLeft>
            <SearchBox>
              <Magnifier />
              <input aria-label="Search" placeholder="Search for tools, help, and more (Alt + Q)" />
            </SearchBox>
            <TitleRight>
              <IconButton aria-label="Settings"><Gear /></IconButton>
              <UserName>Jahangir Alam</UserName>
              <Avatar>JA</Avatar>
            </TitleRight>
          </TitleBar>
          <TabBar>
            <Tabs>
              {tabs.map((tab) => <Tab key={tab} $active={tab === 'Home'}>{tab}</Tab>)}
            </Tabs>
            <Actions>
              <ActionButton><Comment />Comments</ActionButton>
              <ActionButton><CatchUp />Catch up</ActionButton>
              <ActionButton><Pencil />Editing<Chevron /></ActionButton>
              <ActionButton $primary><People />Share<Chevron color="#fff" /></ActionButton>
            </Actions>
          </TabBar>
          <RibbonBar />
          <FormulaBar>
            <NameBox>
              <input aria-label="Name box" defaultValue="I5" />
              <Chevron />
            </NameBox>
            <FxBox>
              <Icon w={16} box="0 0 16 16" stroke="#bdbdbd"><path d="m1 1 14 14M15 1 1 15" /></Icon>
              <Icon w={20} h={14} box="0 0 20 14" stroke="#bdbdbd"><path d="m1 7 6 6L19 1" /></Icon>
              <Fx>fx</Fx>
            </FxBox>
            <FormulaInput>
              <input aria-label="Formula" defaultValue="LastRentIncreaseDate" />
              <Chevron />
            </FormulaInput>
          </FormulaBar>
          <SheetTable />
          <ScrollTrack>
            <ScrollThumb />
            <Icon w={8} h={12} box="0 0 8 12" stroke="none"><path d="M0 0v12l8-6z" fill="#808080" /></Icon>
          </ScrollTrack>
          <SheetBar>
            <SheetNav>
              <IconButton aria-label="Previous sheet"><Icon w={8} h={14} box="0 0 8 14" stroke="#bdbdbd"><path d="M7 1 1 7l6 6" /></Icon></IconButton>
              <IconButton aria-label="Next sheet"><Icon w={8} h={14} box="0 0 8 14" stroke="#bdbdbd"><path d="m1 1 6 6-6 6" /></Icon></IconButton>
              <IconButton aria-label="All sheets"><Icon w={16} h={12} box="0 0 16 12"><path d="M0 1h16M0 6h16M0 11h16" strokeWidth="1.400" /></Icon></IconButton>
            </SheetNav>
            <SheetTab>mipp_tenant_bulk_upload_with_sa</SheetTab>
            <IconButton aria-label="Add sheet"><Icon w={16} box="0 0 16 16"><path d="M8 1v14M1 8h14" strokeWidth="1.500" /></Icon></IconButton>
          </SheetBar>
          <StatusBar>
            <span>Workbook Statistics</span>
            <StatusItems $gap={20}>
              <StatusItems $gap={24}>
                <span>Average: 45732.5</span>
                <span>Count: 2</span>
                <span>Sum: 91465</span>
              </StatusItems>
              <Caret />
              <Icon w={18} h={16} box="0 0 18 16"><rect x=".7" y="1" width="16.600" height="12" rx="2" /><path d="M3.500 4.500h11M3.500 7.500h11" strokeDasharray="1.500 1.500" /></Icon>
              <Icon w={16} h={18} box="0 0 16 18"><path d="M3 15a7.200 7.200 0 1 1 10 0" /><circle cx="8" cy="9" r="3.500" /></Icon>
              <Icon w={16} h={20} box="0 0 16 20"><rect x="8" y="1" width="7" height="7" rx="1.500" /><circle cx="4" cy="7" r="2.500" /><path d="M1 16v-3h8v3" /></Icon>
              <Icon w={14} box="0 0 14 14" stroke="#9a9a9a"><path d="M0 7h14" /></Icon>
              <ZoomSelect $width={64}>
                <select aria-label="Zoom" defaultValue="100%"><option>100%</option></select>
                <Caret />
              </ZoomSelect>
              <Icon w={14} box="0 0 14 14"><path d="M7 0v14M0 7h14" /></Icon>
              <Icon w={15} h={18} box="0 0 15 18"><path d="M1 5V3a2 2 0 0 1 2-2h2M10 1h2a2 2 0 0 1 2 2v2M1 13v2a2 2 0 0 0 2 2h2M10 17h2a2 2 0 0 0 2-2v-2" strokeWidth="1.400" /></Icon>
            </StatusItems>
          </StatusBar>
          <Bubble>
            <Badge>30</Badge>
            <Smudge />
          </Bubble>
        </Window>
      </Frame>
    </>
  );
}
